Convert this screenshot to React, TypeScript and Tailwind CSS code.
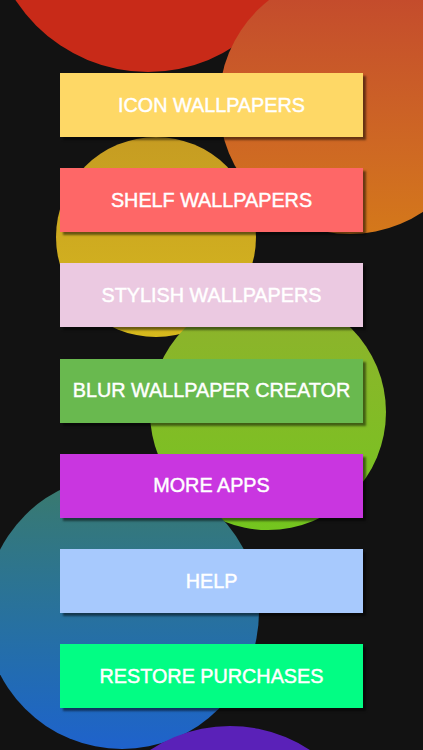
const circles = [
  { left: 148, top: -86, r: 158, bg: "bg-[#c82a18]" },
  { left: 350, top: 103, r: 131, bg: "bg-gradient-to-b from-[#c2462d] to-[#d4781a]" },
  { left: 156, top: 237, r: 100, bg: "bg-gradient-to-b from-[#c69c22] to-[#d6b91d]" },
  { left: 268, top: 412, r: 118, bg: "bg-gradient-to-b from-[#8fb12c] to-[#74c51f]" },
  { left: 122, top: 612, r: 137, bg: "bg-gradient-to-b from-[#3b7a6a] to-[#1f62cc]" },
  { left: 230, top: 871, r: 145, bg: "bg-[#5a21b8]" },
];

const buttons = [
  { label: "ICON WALLPAPERS", bg: "bg-[#fed866]" },
  { label: "SHELF WALLPAPERS", bg: "bg-[#fe6767]" },
  { label: "STYLISH WALLPAPERS", bg: "bg-[#ebc9e1]" },
  { label: "BLUR WALLPAPER CREATOR", bg: "bg-[#69b94f]" },
  { label: "MORE APPS", bg: "bg-[#c936e0]" },
  { label: "HELP", bg: "bg-[#a7c9fd]" },
  { label: "RESTORE PURCHASES", bg: "bg-[#02fd84]" },
];

export default function App() {
  return (
    <div className="relative w-[423px] h-[750px] overflow-hidden bg-[#121212] font-['Liberation_Sans',Arial,sans-serif]">
      {/* background bubbles */}
      {circles.map((c, i) => (
        <div
          key={i}
          className={`absolute rounded-full ${c.bg}`}
          style={{ left: c.left - c.r, top: c.top - c.r, width: c.r * 2, height: c.r * 2 }}
        />
      ))}

      <div className="relative flex flex-col gap-[31.2px] pt-[73px] pl-[60px]">
        {buttons.map((b) => (
          <button
            key={b.label}
            className={`w-[303px] h-[64px] flex items-center justify-center pt-[1px] text-white text-[19.8px] font-normal [-webkit-text-stroke:0.45px_white] shadow-[3px_3px_2px_rgba(0,0,0,0.5)] ${b.bg}`}
          >
            {b.label}
          </button>
        ))}
      </div>
    </div>
  );
}
